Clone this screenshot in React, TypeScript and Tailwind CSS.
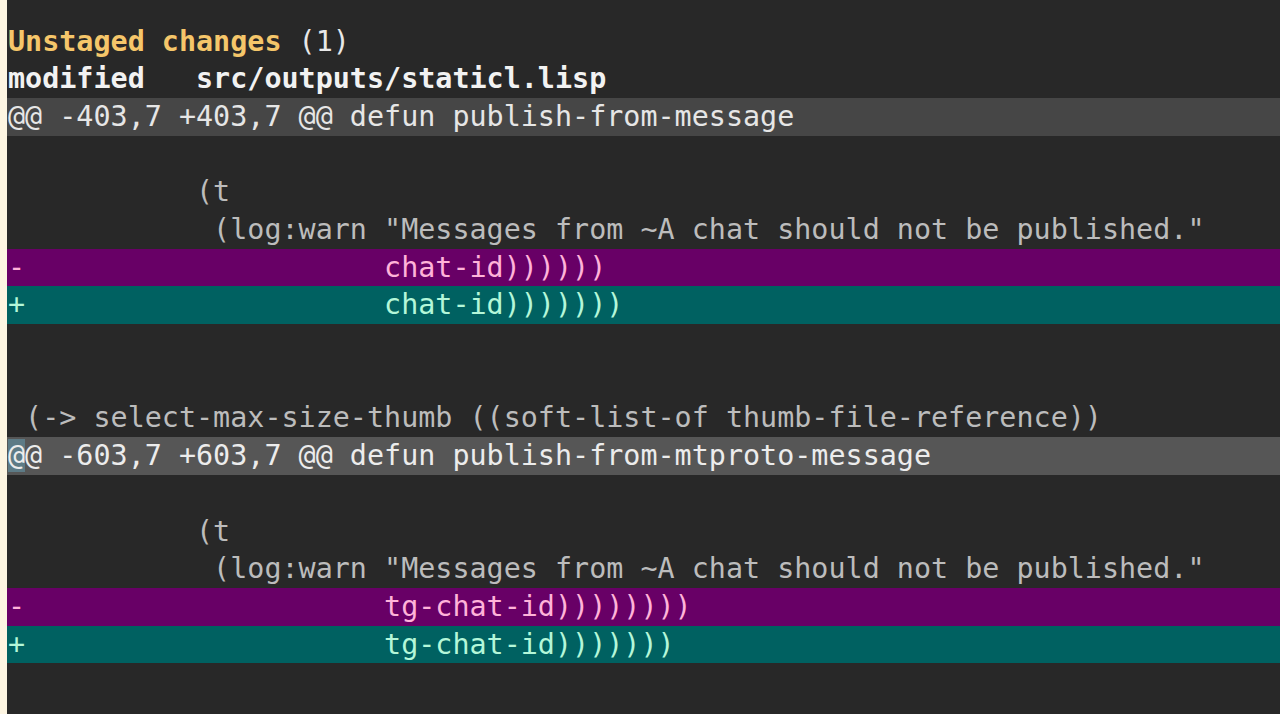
import type { ReactNode } from "react";

type Kind = "plain" | "hunk" | "hunkCurrent" | "removed" | "added";

const rowStyles: Record<Kind, string> = {
  plain: "text-[#bcbcbc]",
  hunk: "bg-[#464646] text-[#e6e6e6]",
  hunkCurrent: "bg-[#565656] text-[#ececec]",
  removed: "bg-[#680066] text-[#ffb3d9]",
  added: "bg-[#006161] text-[#b4f7d9]",
};

function Row({ kind = "plain", children }: { kind?: Kind; children?: ReactNode }) {
  return (
    <div className={`h-[37.7px] whitespace-pre pl-px ${rowStyles[kind]}`}>
      {children ?? " "}
    </div>
  );
}

function Hunk({
  header,
  current,
  removed,
  added,
}: {
  header: string;
  current?: boolean;
  removed: string;
  added: string;
}) {
  return (
    <>
      <Row kind={current ? "hunkCurrent" : "hunk"}>
        {current ? (
          <>
            <span className="bg-[#5d7b86]">@</span>
            {header.slice(1)}
          </>
        ) : (
          header
        )}
      </Row>
      <Row />
      <Row>{"           (t"}</Row>
      <Row>{'            (log:warn "Messages from ~A chat should not be published."'}</Row>
      <Row kind="removed">{"-                     " + removed}</Row>
      <Row kind="added">{"+                     " + added}</Row>
    </>
  );
}

export default function App() {
  return (
    <div className="flex h-[714px] w-[1280px] overflow-hidden bg-[#282828]">
      <div className="w-[7px] shrink-0 bg-[#fdf5e2]" />
      <div
        className="flex-1 pt-[22.6px] text-[28.4px] leading-[37.7px]"
        style={{ fontFamily: '"DejaVu Sans Mono", "Liberation Mono", monospace' }}
      >
        <Row>
          <span className="font-bold text-[#f5c66a]">Unstaged changes</span>
          <span className="text-[#e8e8e8]"> (1)</span>
        </Row>
        <Row>
          <span className="font-bold text-[#f2f2f2]">modified   src/outputs/staticl.lisp</span>
        </Row>
        <Hunk
          header="@@ -403,7 +403,7 @@ defun publish-from-message"
          removed="chat-id))))))"
          added="chat-id)))))))"
        />
        <Row />
        <Row />
        <Row>{" (-> select-max-size-thumb ((soft-list-of thumb-file-reference))"}</Row>
        <Hunk
          current
          header="@@ -603,7 +603,7 @@ defun publish-from-mtproto-message"
          removed="tg-chat-id))))))))"
          added="tg-chat-id)))))))"
        />
        <Row />
      </div>
    </div>
  );
}
